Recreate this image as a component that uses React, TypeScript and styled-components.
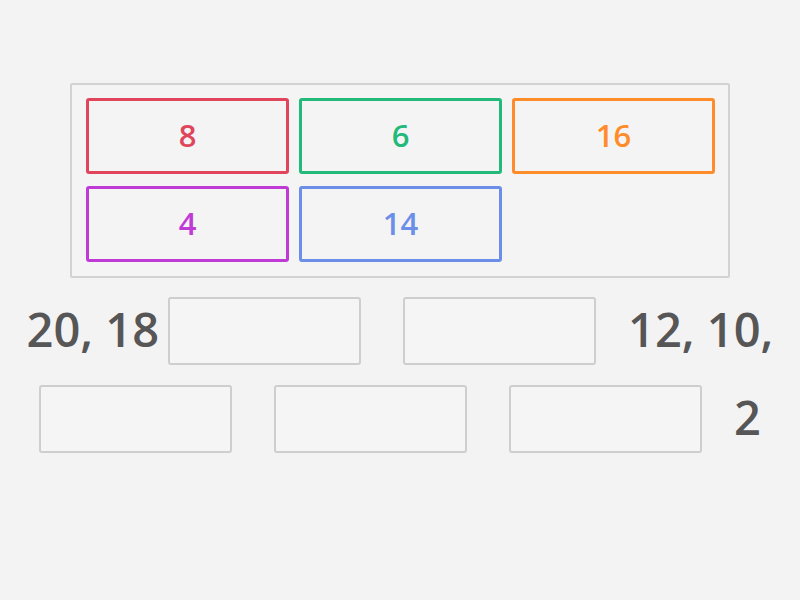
import React from "react";
import styled, { createGlobalStyle } from "styled-components";

const Global = createGlobalStyle`
  html, body {
    margin: 0;
    padding: 0;
    background: #f4f3f4;
    font-family: "Open Sans", "Noto Sans", sans-serif;
  }
  #root { width: 800px; }
`;

const Page = styled.div`
  width: 800px;
  height: 600px;
  box-sizing: border-box;
  padding-top: 83px;
  display: flex;
  flex-direction: column;
  align-items: center;
  background: #f4f3f4;
`;

const Bank = styled.div`
  box-sizing: border-box;
  width: 660px;
  height: 195px;
  padding: 13px 13px 13px 14px;
  border: 2px solid #d3d2d3;
  border-radius: 2px;
  background: #f5f4f5;
  display: grid;
  grid-template-columns: repeat(3, 203px);
  grid-auto-rows: 76px;
  column-gap: 10px;
  row-gap: 12px;
`;

const Tile = styled.div<{ $c: string }>`
  box-sizing: border-box;
  border: 3px solid ${(p) => p.$c};
  border-radius: 3px;
  background: #f5f4f5;
  color: ${(p) => p.$c};
  display: flex;
  align-items: center;
  justify-content: center;
  font-size: 31px;
  font-weight: 600;
  line-height: 1;
  padding-bottom: 2px;
`;

const Sentence = styled.div`
  margin-top: 19px;
  display: flex;
  flex-direction: column;
  gap: 20px;
  width: 800px;
`;

const Line = styled.div`
  display: flex;
  align-items: center;
  justify-content: center;
  height: 68px;
`;

const Word = styled.span<{ $lead?: number }>`
  margin-left: ${(p) => p.$lead ?? 0}px;
  font-size: 47px;
  font-weight: 600;
  color: #575657;
  line-height: 1;
  white-space: pre;
  padding-bottom: 4px;
`;

const Slot = styled.div<{ $lead?: number }>`
  margin-left: ${(p) => p.$lead ?? 0}px;
  box-sizing: border-box;
  width: 193px;
  height: 68px;
  border: 2px solid #cfcecf;
  border-radius: 3px;
  background: #f6f5f6;
  flex: none;
`;

const tiles = [
  { v: "8", c: "#e0455c" },
  { v: "6", c: "#22b97b" },
  { v: "16", c: "#ff8c2a" },
  { v: "4", c: "#c03bd6" },
  { v: "14", c: "#6b8fe9" },
];

export default function App() {
  return (
    <>
      <Global />
      <Page>
        <Bank>
          {tiles.map((t) => (
            <Tile key={t.v} $c={t.c}>
              {t.v}
            </Tile>
          ))}
        </Bank>
        <Sentence>
          <Line>
            <Word>20, 18</Word>
            <Slot $lead={9} />
            <Slot $lead={42} />
            <Word $lead={32}>12, 10,</Word>
          </Line>
          <Line>
            <Slot />
            <Slot $lead={42} />
            <Slot $lead={42} />
            <Word $lead={32}>2</Word>
          </Line>
        </Sentence>
      </Page>
    </>
  );
}
